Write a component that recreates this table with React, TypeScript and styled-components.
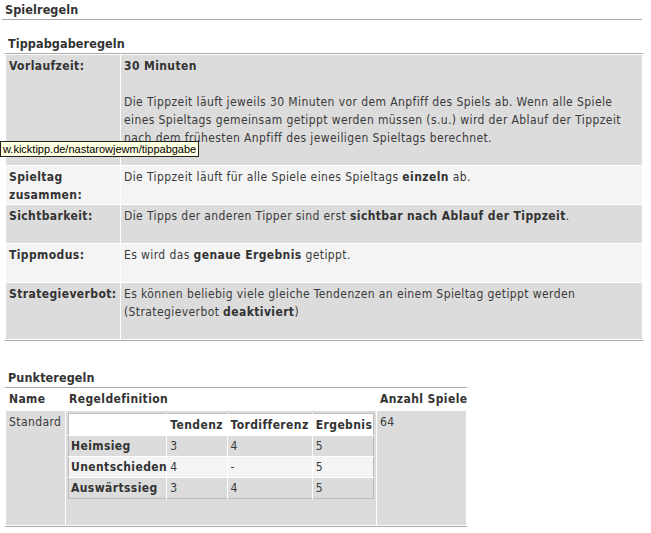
import React from "react";
import styled, { createGlobalStyle } from "styled-components";

const Global = createGlobalStyle`
  html, body { margin: 0; padding: 0; background: #fff; }
  body {
    font-family: "DejaVu Sans Condensed", "DejaVu Sans", sans-serif;
    font-size: 12px;
    letter-spacing: 0.4px;
    color: #3a3a3a;
  }
  th, td { box-sizing: border-box; }
`;

const Page = styled.div`
  position: relative;
  width: 640px;
  margin-left: 2px;
  padding-top: 1px;
`;

const PageTitle = styled.h1`
  margin: 0;
  padding-left: 3px;
  font-size: 12.5px;
  letter-spacing: 0.1px;
  line-height: 18px;
  font-weight: bold;
  color: #333;
  border-bottom: 1px solid #aaa;
`;

const Section = styled.section<{ $width: number; $top: number }>`
  width: ${(p) => p.$width}px;
  margin: ${(p) => p.$top}px 0 0 3px;
`;

const SectionTitle = styled.h2`
  margin: 0;
  padding-left: 3px;
  font-size: 12.5px;
  letter-spacing: 0.1px;
  line-height: 18px;
  font-weight: bold;
  color: #333;
  border-bottom: 1px solid #aaa;
`;

const Table = styled.table`
  width: 100%;
  border-collapse: separate;
  border-spacing: 1px;
  border-bottom: 1px solid #aaa;
  table-layout: fixed;
`;

const Row = styled.tr<{ $shade: "dark" | "light" | "none" }>`
  background: ${(p) =>
    p.$shade === "dark" ? "#dcdcdc" : p.$shade === "light" ? "#f4f4f4" : "transparent"};
`;

const Label = styled.th<{ $width?: number }>`
  width: ${(p) => (p.$width ? `${p.$width}px` : "auto")};
  padding: 2px 3px 0;
  text-align: left;
  vertical-align: top;
  font-weight: bold;
  line-height: 18px;
  color: #333;
`;

const Value = styled.td`
  padding: 2px 3px 18px;
  vertical-align: top;
  line-height: 18px;
`;

const Plain = styled.td<{ $bottom?: number; $pad?: number }>`
  padding: ${(p) => `${p.$pad ?? 2}px ${p.$pad ?? 3}px ${p.$bottom ?? 18}px`};
  vertical-align: top;
  line-height: 18px;
`;

const HeadCell = styled.th<{ $width?: number }>`
  width: ${(p) => (p.$width ? `${p.$width}px` : "auto")};
  padding: 1px 3px 2px;
  text-align: left;
  font-weight: bold;
  line-height: 18px;
  color: #333;
  white-space: nowrap;
`;

const Strong = styled.b`
  color: #333;
`;

const Gap = styled.div`
  height: 18px;
`;

const Inner = styled.table`
  width: 306px;
  border-collapse: collapse;
  border: 1px solid #bdbdbd;
  background: #fff;
  table-layout: fixed;
  & tr + tr > * { border-top: 1px solid #fff; }
  & tr > * + * { border-left: 1px solid #fff; }
`;

const InnerHead = styled.th<{ $width: number }>`
  width: ${(p) => p.$width}px;
  padding: 2px 3px 1px;
  text-align: left;
  font-weight: bold;
  line-height: 18px;
  color: #333;
  white-space: nowrap;
`;

const InnerRow = styled.tr<{ $shade: "dark" | "light" }>`
  background: ${(p) => (p.$shade === "dark" ? "#dcdcdc" : "#f4f4f4")};
`;

const InnerLabel = styled.th`
  padding: 1px 2px;
  text-align: left;
  font-weight: bold;
  line-height: 18px;
  color: #333;
  white-space: nowrap;
`;

const InnerCell = styled.td`
  padding: 1px 3px;
  line-height: 18px;
`;

const Tooltip = styled.div`
  position: absolute;
  left: -2px;
  top: 141px;
  padding: 0 2px 0 2px;
  height: 14px;
  line-height: 14px;
  background: #ffffe1;
  border: 1px solid #222;
  font-family: "Liberation Sans", Arial, sans-serif;
  font-size: 11px;
  letter-spacing: 0;
  color: #000;
  white-space: nowrap;
`;

const rules = [
  {
    label: "Spieltag zusammen:",
    shade: "light" as const,
    body: (
      <>
        Die Tippzeit läuft für alle Spiele eines Spieltags <Strong>einzeln</Strong> ab.
      </>
    ),
  },
  {
    label: "Sichtbarkeit:",
    shade: "dark" as const,
    body: (
      <>
        Die Tipps der anderen Tipper sind erst <Strong>sichtbar nach Ablauf der Tippzeit</Strong>.
      </>
    ),
  },
  {
    label: "Tippmodus:",
    shade: "light" as const,
    body: (
      <>
        Es wird das <Strong>genaue Ergebnis</Strong> getippt.
      </>
    ),
  },
  {
    label: "Strategieverbot:",
    shade: "dark" as const,
    body: (
      <>
        Es können beliebig viele gleiche Tendenzen an einem Spieltag getippt werden
        <br />
        (Strategieverbot <Strong>deaktiviert</Strong>)
      </>
    ),
  },
];

const points = [
  { name: "Heimsieg", t: "3", d: "4", e: "5", shade: "dark" as const },
  { name: "Unentschieden", t: "4", d: "-", e: "5", shade: "light" as const },
  { name: "Auswärtssieg", t: "3", d: "4", e: "5", shade: "dark" as const },
];

export default function App() {
  return (
    <>
      <Global />
      <Page>
        <PageTitle>Spielregeln</PageTitle>
        <Section $width={638} $top={15}>
          <SectionTitle>Tippabgaberegeln</SectionTitle>
          <Table>
            <tbody>
              <Row $shade="dark">
                <Label $width={114}>Vorlaufzeit:</Label>
                <Value>
                  <Strong>30 Minuten</Strong>
                  <Gap />
                  Die Tippzeit läuft jeweils 30 Minuten vor dem Anpfiff des Spiels ab. Wenn alle
                  Spiele eines Spieltags gemeinsam getippt werden müssen (s.u.) wird der Ablauf der
                  Tippzeit nach dem frühesten Anpfiff des jeweiligen Spieltags berechnet.
                </Value>
              </Row>
              {rules.map((r) => (
                <Row key={r.label} $shade={r.shade}>
                  <Label>{r.label}</Label>
                  <Value>{r.body}</Value>
                </Row>
              ))}
            </tbody>
          </Table>
        </Section>
        <Section $width={462} $top={28}>
          <SectionTitle>Punkteregeln</SectionTitle>
          <Table>
            <tbody>
              <Row $shade="none">
                <HeadCell $width={59}>Name</HeadCell>
                <HeadCell $width={310}>Regeldefinition</HeadCell>
                <HeadCell>Anzahl Spiele</HeadCell>
              </Row>
              <Row $shade="dark">
                <Plain>Standard</Plain>
                <Plain $pad={2} $bottom={26}>
                  <Inner>
                    <tbody>
                      <tr>
                        <InnerHead $width={98}></InnerHead>
                        <InnerHead $width={60}>Tendenz</InnerHead>
                        <InnerHead $width={85}>Tordifferenz</InnerHead>
                        <InnerHead $width={61}>Ergebnis</InnerHead>
                      </tr>
                      {points.map((p) => (
                        <InnerRow key={p.name} $shade={p.shade}>
                          <InnerLabel>{p.name}</InnerLabel>
                          <InnerCell>{p.t}</InnerCell>
                          <InnerCell>{p.d}</InnerCell>
                          <InnerCell>{p.e}</InnerCell>
                        </InnerRow>
                      ))}
                    </tbody>
                  </Inner>
                </Plain>
                <Plain>64</Plain>
              </Row>
            </tbody>
          </Table>
        </Section>
        <Tooltip>w.kicktipp.de/nastarowjewm/tippabgabe</Tooltip>
      </Page>
    </>
  );
}
